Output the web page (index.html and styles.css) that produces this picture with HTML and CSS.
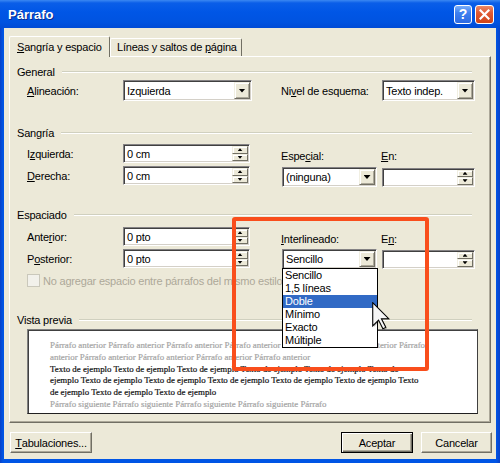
FILE: index.html
```html
<!DOCTYPE html>
<html lang="es">
<head>
<meta charset="utf-8">
<title>Párrafo</title>
<link rel="stylesheet" href="styles.css">
</head>
<body>
<div class="window">
  <div class="titlebar">
    <span class="title">Párrafo</span>
    <span class="tb-btn help">?</span>
    <span class="tb-btn close"><svg width="11" height="11" viewBox="0 0 11 11"><path d="M1.5 1.5 L9.5 9.5 M9.5 1.5 L1.5 9.5" stroke="#fff" stroke-width="2.2" stroke-linecap="square"/></svg></span>
  </div>
  <div class="client">
    <div class="tabs">
      <div class="tab active"><u>S</u>angría y espacio</div>
      <div class="tab inactive">Líneas y saltos de <u>p</u>ágina</div>
    </div>
    <div class="panel">
      <section class="group general">
        <div class="group-head"><span>General</span><i class="rule"></i></div>
        <div class="row">
          <span class="lbl"><u>A</u>lineación:</span>
          <div class="combo c-align"><span class="val">Izquierda</span><span class="drop"></span></div>
          <span class="lbl2">Ni<u>v</u>el de esquema:</span>
          <div class="combo c-nivel"><span class="val">Texto indep.</span><span class="drop"></span></div>
        </div>
      </section>

      <section class="group sangria">
        <div class="group-head"><span>Sangría</span><i class="rule"></i></div>
        <div class="body">
          <div class="leftcol">
            <div class="row r1">
              <span class="lbl">I<u>z</u>quierda:</span>
              <div class="spin s-left"><span class="val">0 cm</span><span class="spinbtns"><span class="up"></span><span class="down"></span></span></div>
            </div>
            <div class="row r2">
              <span class="lbl"><u>D</u>erecha:</span>
              <div class="spin s-left"><span class="val">0 cm</span><span class="spinbtns"><span class="up"></span><span class="down"></span></span></div>
            </div>
          </div>
          <div class="rightcol">
            <div class="toplabels"><span class="tl1">Espe<u>c</u>ial:</span><span><u>E</u>n:</span></div>
            <div class="row inputs">
              <div class="combo c-small"><span class="val">(ninguna)</span><span class="drop"></span></div>
              <div class="spin s-right"><span class="val"></span><span class="spinbtns"><span class="up"></span><span class="down"></span></span></div>
            </div>
          </div>
        </div>
      </section>

      <section class="group espaciado">
        <div class="group-head"><span>Espaciado</span><i class="rule"></i></div>
        <div class="body">
          <div class="leftcol">
            <div class="row r1">
              <span class="lbl">Ante<u>r</u>ior:</span>
              <div class="spin s-left"><span class="val">0 pto</span><span class="spinbtns"><span class="up"></span><span class="down"></span></span></div>
            </div>
            <div class="row r2">
              <span class="lbl">P<u>o</u>sterior:</span>
              <div class="spin s-left"><span class="val">0 pto</span><span class="spinbtns"><span class="up"></span><span class="down"></span></span></div>
            </div>
          </div>
          <div class="rightcol">
            <div class="toplabels"><span class="tl1"><u>I</u>nterlineado:</span><span>E<u>n</u>:</span></div>
            <div class="row inputs">
              <div class="combo c-small"><span class="val">Sencillo</span><span class="drop"></span></div>
              <div class="spin s-right"><span class="val"></span><span class="spinbtns"><span class="up"></span><span class="down"></span></span></div>
            </div>
          </div>
        </div>
        <div class="checkrow"><span class="chk"></span><span class="chk-text">No agregar espacio entre párrafos del mismo estilo</span></div>
      </section>

      <section class="group vista">
        <div class="group-head"><span>Vista previa</span><i class="rule"></i></div>
        <div class="preview">
          <div class="pl grey">Párrafo anterior Párrafo anterior Párrafo anterior Párrafo anterior Párrafo anterior Párrafo anterior Párrafo</div>
          <div class="pl grey">anterior Párrafo anterior Párrafo anterior Párrafo anterior Párrafo anterior</div>
          <div class="pl">Texto de ejemplo Texto de ejemplo Texto de ejemplo Texto de ejemplo Texto de ejemplo Texto de</div>
          <div class="pl">ejemplo Texto de ejemplo Texto de ejemplo Texto de ejemplo Texto de ejemplo Texto de ejemplo Texto</div>
          <div class="pl">de ejemplo Texto de ejemplo Texto de ejemplo</div>
          <div class="pl grey">Párrafo siguiente Párrafo siguiente Párrafo siguiente Párrafo siguiente Párrafo</div>
        </div>
      </section>
    </div>
    <div class="btns">
      <span class="btn b-tab"><u>T</u>abulaciones...</span>
      <span class="spacer"></span>
      <span class="btn b-ok default">Aceptar</span>
      <span class="btn b-cancel">Cancelar</span>
    </div>
  </div>

  <ul class="droplist">
    <li>Sencillo</li>
    <li>1,5 líneas</li>
    <li class="sel">Doble</li>
    <li>Mínimo</li>
    <li>Exacto</li>
    <li>Múltiple</li>
  </ul>
  <div class="highlight-box"></div>
  <svg class="cursor" width="18" height="29" viewBox="0 0 12.4 20">
    <path d="M1.3 1.3 L1.3 17.3 L5.3 13.3 L8.3 19.3 L10.3 18.3 L7.3 12.3 L12.3 12.3 Z" fill="#000" opacity="0.25"/>
    <path d="M0.5 0.5 L0.5 16.5 L4.5 12.5 L7.5 18.5 L9.5 17.5 L6.5 11.5 L11.5 11.5 Z" fill="#f6f6f6" stroke="#000" stroke-width="0.75" stroke-linejoin="miter"/>
  </svg>
</div>
</body>
</html>
```

FILE: styles.css
```css
body {
  margin: 0;
  font-family: "Liberation Sans", Arial, sans-serif;
  font-size: 11px;
  letter-spacing: -0.2px;
  color: #000;
}

u { text-decoration: underline; text-underline-offset: 1px; }

.window {
  position: relative;
  width: 500px;
  height: 463px;
  display: flex;
  flex-direction: column;
  background: linear-gradient(90deg, #0841C8 0, #0055E5 3px, #0055E5 496px, #0841C8 500px);
  overflow: hidden;
}

.titlebar {
  height: 28px;
  flex: none;
  display: flex;
  align-items: center;
  padding: 0 6px 0 8px;
  background: linear-gradient(180deg, #3B88F2 0, #0A5EE8 3px, #0056E6 12px, #0053E0 22px, #004BD6 28px);
}

.title {
  flex: 1;
  color: #fff;
  font-weight: bold;
  font-size: 13px;
  letter-spacing: 0;
  text-shadow: 1px 1px 0 #0A2C8E;
}

.tb-btn {
  box-sizing: border-box;
  height: 19px;
  border: 1px solid #fff;
  border-radius: 3px;
  display: flex;
  align-items: center;
  justify-content: center;
}

.help {
  width: 18px;
  margin-right: 3px;
  background: linear-gradient(180deg, #7AAEF9 0, #3E80F0 40%, #2D6AE2 100%);
  color: #fff;
  font-weight: bold;
  font-size: 14px;
  letter-spacing: 0;
}

.close {
  width: 19px;
  background: linear-gradient(180deg, #EC8A68 0, #E05A34 40%, #CF4418 100%);
}

.client {
  flex: 1;
  margin: 0 4px 4px;
  background: #ECE9D8;
  padding: 8px 5px 0;
  display: flex;
  flex-direction: column;
}

.tabs {
  display: flex;
  align-items: flex-end;
  height: 20px;
  flex: none;
}

.tab {
  box-sizing: border-box;
  border: 1px solid;
  border-color: #fff #716F64 transparent #fff;
  border-bottom: none;
  border-radius: 2px 2px 0 0;
  background: #ECE9D8;
  white-space: nowrap;
  line-height: 13px;
}

.tab.active {
  width: 101px;
  height: 21px;
  margin-bottom: -1px;
  padding: 4px 0 0 7px;
  position: relative;
  z-index: 1;
}

.tab.inactive {
  width: 132px;
  height: 18px;
  padding: 2px 0 0 6px;
}

.panel {
  box-sizing: border-box;
  height: 367px;
  flex: none;
  border: 1px solid;
  border-color: #fff #716F64 #716F64 #fff;
  box-shadow: inset -1px -1px 0 #ACA899;
  padding: 8px 12px 0 7px;
}

.group-head {
  display: flex;
  align-items: center;
  height: 14px;
  line-height: 14px;
  white-space: nowrap;
}

.group-head .rule {
  flex: 1;
  margin: 0 6px 0 7px;
  border-top: 1px solid #D0D0BF;
  border-bottom: 1px solid #fff;
}

.row {
  display: flex;
  align-items: center;
}

.lbl {
  box-sizing: border-box;
  width: 106px;
  padding-left: 10px;
  white-space: nowrap;
}

.lbl2 {
  box-sizing: border-box;
  width: 101px;
  margin-left: 29px;
  white-space: nowrap;
}

/* combo box */
.combo, .spin {
  box-sizing: border-box;
  display: flex;
  background: #fff;
  border: 1px solid;
  border-color: #848284 #fff #fff #848284;
  box-shadow: inset 1px 1px 0 #404040, inset -1px -1px 0 #D4D0C8;
  padding: 1px;
}

.combo { height: 21px; }
.spin { height: 19px; }

.val {
  flex: 1;
  padding-left: 2px;
  white-space: nowrap;
  overflow: hidden;
  display: flex;
  align-items: center;
}

.drop {
  flex: none;
  width: 16px;
  box-sizing: border-box;
  border: 1px solid;
  border-color: #F1EFE2 #716F64 #716F64 #F1EFE2;
  box-shadow: inset 1px 1px 0 #fff, inset -1px -1px 0 #ACA899;
  background: #ECE9D8;
  display: flex;
  align-items: center;
  justify-content: center;
}

.drop::after {
  content: "";
  width: 7px;
  height: 4px;
  background: #000;
  clip-path: polygon(0 0, 100% 0, 50% 100%);
}

.spinbtns {
  flex: none;
  width: 16px;
  display: flex;
  flex-direction: column;
}

.spinbtns span {
  flex: 1;
  box-sizing: border-box;
  border: 1px solid;
  border-color: #F1EFE2 #716F64 #716F64 #F1EFE2;
  box-shadow: inset 1px 1px 0 #fff;
  background: #ECE9D8;
  display: flex;
  align-items: center;
  justify-content: center;
}

.spinbtns span::after {
  content: "";
  width: 5px;
  height: 3px;
  background: #000;
}

.spinbtns .up::after { clip-path: polygon(50% 0, 100% 100%, 0 100%); }
.spinbtns .down::after { clip-path: polygon(0 0, 100% 0, 50% 100%); }

.c-align { width: 129px; }
.c-nivel { width: 93px; }
.c-small { width: 95px; margin-left: 1px; height: 20px; }
.s-left { width: 127px; }
.s-right { width: 93px; margin-left: 5px; }

/* groups */
.general .row { margin-top: 1px; height: 21px; }

.sangria { margin-top: 25px; }
.espaciado { margin-top: 21px; }
.vista { margin-top: 26px; }

.body {
  display: flex;
  align-items: flex-start;
}

.leftcol .r2 { margin-top: 3px; }
.sangria .leftcol { margin-top: 4px; }
.espaciado .leftcol { margin-top: 5px; }

.rightcol { margin-left: 31px; }

.toplabels {
  display: flex;
  height: 13px;
  line-height: 13px;
  white-space: nowrap;
}

.toplabels .tl1 { width: 100px; }

.sangria .toplabels { margin-top: 10px; }
.sangria .inputs { margin-top: 4px; }
.espaciado .toplabels { margin-top: 11px; }
.espaciado .inputs { margin-top: 3px; }

.checkrow {
  display: flex;
  align-items: center;
  height: 13px;
  margin-top: 5px;
  padding-left: 10px;
}

.chk {
  box-sizing: border-box;
  width: 13px;
  height: 13px;
  border: 1px solid #CAC8BB;
  background: #F2F1EB;
  margin-right: 3px;
}

.chk-text {
  color: #ACA899;
  white-space: nowrap;
}

/* preview */
.preview {
  box-sizing: border-box;
  margin: 2px 0 0 10px;
  width: 451px;
  height: 85px;
  background: #fff;
  border: 1px solid;
  border-color: #808080 #404040 #202020 #808080;
  box-shadow: inset 1px 1px 0 #404040;
  padding: 10px 0 0 22px;
  overflow: hidden;
  font-family: "Liberation Serif", "Times New Roman", serif;
  font-size: 8.9px;
  line-height: 11.8px;
  letter-spacing: 0;
}

.pl {
  white-space: nowrap;
  color: #111;
  -webkit-text-stroke: 0.2px currentColor;
}
.pl.grey { color: #A4A4A4; }

/* buttons */
.btns {
  display: flex;
  margin-top: 9px;
  margin-right: -1px;
  height: 21px;
}

.spacer { flex: 1; }

.btn {
  box-sizing: border-box;
  height: 21px;
  display: flex;
  align-items: center;
  justify-content: center;
  background: #ECE9D8;
  border: 1px solid;
  border-color: #fff #716F64 #716F64 #fff;
  box-shadow: inset -1px -1px 0 #ACA899;
  white-space: nowrap;
}

.b-tab { width: 82px; margin-left: 1px; }
.b-ok { width: 72px; margin-right: 8px; }
.b-cancel { width: 71px; }

.btn.default {
  border-color: #000;
  box-shadow: inset 1px 1px 0 #fff, inset -1px -1px 0 #716F64, inset -2px -2px 0 #ACA899;
}

/* overlays */
.droplist {
  position: absolute;
  left: 282px;
  top: 268px;
  width: 96px;
  box-sizing: border-box;
  margin: 0;
  padding: 0;
  list-style: none;
  background: #fff;
  border: 1px solid #000;
}

.droplist li {
  height: 13px;
  line-height: 13px;
  padding-left: 2px;
  white-space: nowrap;
}

.droplist li.sel {
  background: #316AC5;
  color: #fff;
}

.highlight-box {
  position: absolute;
  left: 232px;
  top: 217px;
  width: 197px;
  height: 154px;
  box-sizing: border-box;
  border: 4px solid #F94E1C;
  border-radius: 3px;
}

.cursor {
  position: absolute;
  left: 372px;
  top: 302px;
}
```
